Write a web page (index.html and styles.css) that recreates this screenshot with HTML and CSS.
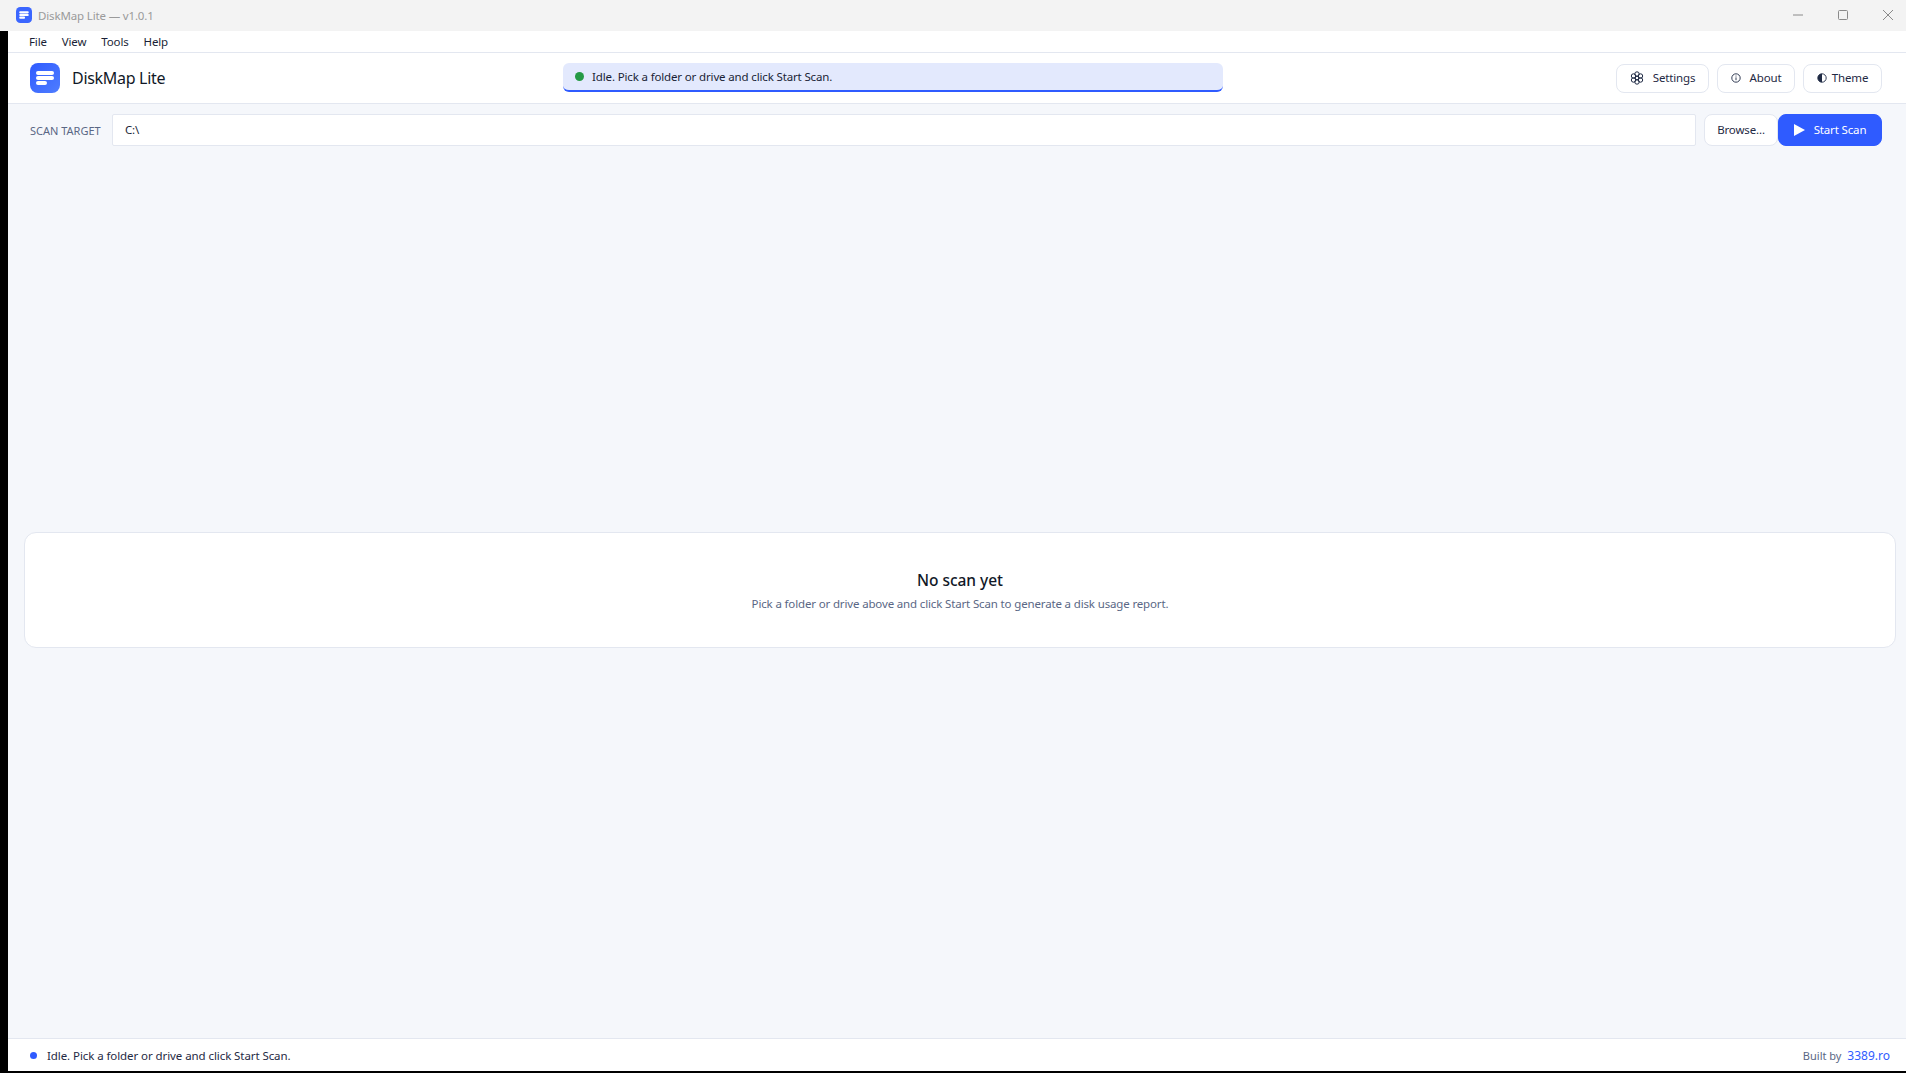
FILE: index.html
```html
<!DOCTYPE html>
<html lang="en">
<head>
    <meta charset="UTF-8">
    <title>DiskMap Lite — v1.0.1</title>
    <link rel="stylesheet" href="styles.css">
</head>
<body>
    <div class="titlebar">
        <div class="titlebar-left">
            <svg class="title-icon" viewBox="0 0 30 30">
                <rect width="30" height="30" rx="8" fill="#3b66ff"/>
                <rect x="6" y="8" width="18" height="4" rx="2" fill="#fff"/>
                <rect x="6" y="13" width="18" height="4" rx="2" fill="#fff"/>
                <rect x="6" y="18" width="11" height="4" rx="2" fill="#fff"/>
            </svg>
            <span>DiskMap Lite — v1.0.1</span>
        </div>
        <div class="window-controls">
            <svg class="win-btn" viewBox="0 0 12 12"><path d="M1 6h10" stroke="#8a8a8a" fill="none"/></svg>
            <svg class="win-btn" viewBox="0 0 12 12"><rect x="1.5" y="1.5" width="9" height="9" rx="1" stroke="#8a8a8a" fill="none"/></svg>
            <svg class="win-btn" viewBox="0 0 12 12"><path d="M1 1l10 10M11 1L1 11" stroke="#8a8a8a" fill="none"/></svg>
        </div>
    </div>

    <div class="window-body">
        <div class="edge"></div>
        <div class="app">
            <div class="menubar">
                <span>File</span>
                <span>View</span>
                <span>Tools</span>
                <span>Help</span>
            </div>

            <div class="header">
                <div class="brand">
                    <svg class="logo" viewBox="0 0 30 30">
                        <defs>
                            <linearGradient id="logo-fill" x1="0" y1="0" x2="1" y2="1">
                                <stop offset="0" stop-color="#2f5bff"/>
                                <stop offset="1" stop-color="#4f7dff"/>
                            </linearGradient>
                        </defs>
                        <rect width="30" height="30" rx="8" fill="url(#logo-fill)"/>
                        <rect x="6" y="8" width="18" height="4" rx="2" fill="#fff"/>
                        <rect x="6" y="13" width="18" height="4" rx="2" fill="#fff"/>
                        <rect x="6" y="18" width="11" height="4" rx="2" fill="#fff"/>
                    </svg>
                    <span class="brand-name">DiskMap Lite</span>
                </div>
                <div class="status-banner">
                    <span class="status-dot"></span>
                    <span>Idle. Pick a folder or drive and click Start Scan.</span>
                </div>
                <div class="actions">
                    <button class="btn btn-settings">
                        <svg class="btn-icon" viewBox="0 0 14 14" fill="none" stroke="#1f2a44" stroke-width="1">
                            <circle cx="7" cy="7" r="1.8"/>
                            <circle cx="7" cy="3" r="2.2"/>
                            <circle cx="10.5" cy="5" r="2.2"/>
                            <circle cx="10.5" cy="9" r="2.2"/>
                            <circle cx="7" cy="11" r="2.2"/>
                            <circle cx="3.5" cy="9" r="2.2"/>
                            <circle cx="3.5" cy="5" r="2.2"/>
                        </svg>
                        Settings
                    </button>
                    <button class="btn btn-about">
                        <svg class="btn-icon-small" viewBox="0 0 10 10" fill="none" stroke="#1f2a44" stroke-width="0.9">
                            <circle cx="5" cy="5" r="4.2"/>
                            <path d="M5 4.4v2.8M5 2.6v0.9"/>
                        </svg>
                        About
                    </button>
                    <button class="btn btn-theme">
                        <svg class="btn-icon-small" viewBox="0 0 10 10">
                            <circle cx="5" cy="5" r="4.2" fill="none" stroke="#1f2a44" stroke-width="0.9"/>
                            <path d="M5 .8a4.2 4.2 0 0 0 0 8.4z" fill="#1f2a44"/>
                        </svg>
                        Theme
                    </button>
                </div>
            </div>

            <div class="scan-row">
                <label class="scan-label">SCAN TARGET</label>
                <input class="scan-input" type="text" value="C:\">
                <button class="btn btn-browse">Browse...</button>
                <button class="btn btn-start">
                    <svg class="play-icon" viewBox="0 0 11 12"><path d="M0 0l11 6-11 6z" fill="#fff"/></svg>
                    Start Scan
                </button>
            </div>

            <div class="main">
                <div class="empty-card">
                    <div class="empty-title">No scan yet</div>
                    <div class="empty-text">Pick a folder or drive above and click Start Scan to generate a disk usage report.</div>
                </div>
            </div>

            <div class="footer">
                <div class="footer-status">
                    <span class="footer-dot"></span>
                    <span>Idle. Pick a folder or drive and click Start Scan.</span>
                </div>
                <div class="footer-credit">Built by <a class="credit-link">3389.ro</a></div>
            </div>
        </div>
    </div>
    <div class="bottom-edge"></div>
</body>
</html>
```

FILE: styles.css
```css
* {
    box-sizing: border-box;
}
html, body {
    height: 100%;
}
body {
    margin: 0;
    display: flex;
    flex-direction: column;
    overflow: hidden;
    font-family: "Noto Sans", "Open Sans", sans-serif;
    font-size: 11.5px;
    letter-spacing: -0.15px;
    color: #1f2a44;
    background-color: #000;
}
.titlebar {
    height: 31px;
    flex: none;
    display: flex;
    justify-content: space-between;
    align-items: center;
    padding: 0 0 1px 16px;
    background-color: #f3f3f3;
    color: #9a9a9a;
}
.titlebar-left {
    display: flex;
    align-items: center;
    gap: 6px;
}
.title-icon {
    width: 16px;
    height: 16px;
}
.window-controls {
    display: flex;
    gap: 33px;
    padding-right: 12px;
}
.win-btn {
    width: 12px;
    height: 12px;
}
.window-body {
    flex: 1;
    display: flex;
    min-height: 0;
}
.edge {
    width: 8px;
    flex: none;
    background-color: #000;
}
.bottom-edge {
    height: 2px;
    flex: none;
    background-color: #000;
}
.app {
    flex: 1;
    display: flex;
    flex-direction: column;
    min-width: 0;
    background-color: #f5f7fb;
}
.menubar {
    height: 22px;
    flex: none;
    display: flex;
    align-items: center;
    gap: 15px;
    padding-left: 21px;
    background-color: #fff;
    border-bottom: 1px solid #e3e7f0;
    color: #1a1f36;
}
.header {
    height: 51px;
    flex: none;
    display: flex;
    justify-content: space-between;
    align-items: center;
    padding: 0 24px 0 22px;
    background-color: #fff;
    border-bottom: 1px solid #e3e7f0;
}
.brand {
    display: flex;
    align-items: center;
    gap: 12px;
}
.logo {
    width: 30px;
    height: 30px;
}
.brand-name {
    font-size: 16px;
    font-weight: 400;
    letter-spacing: -0.3px;
    color: #111827;
}
.status-banner {
    width: 660px;
    height: 29px;
    margin: 0 0 1px 5px;
    display: flex;
    align-items: center;
    gap: 8px;
    padding: 0 12px;
    background-color: #e3e9fd;
    border-bottom: 2px solid #2f5bff;
    border-radius: 6px;
    color: #1a1f36;
}
.status-dot {
    width: 9px;
    height: 9px;
    border-radius: 50%;
    background-color: #259a45;
}
.actions {
    display: flex;
    gap: 8px;
}
.btn {
    height: 29px;
    display: flex;
    align-items: center;
    justify-content: center;
    padding: 0 0 1px;
    font-family: inherit;
    font-size: 11.5px;
    letter-spacing: inherit;
    color: #1f2a44;
    background-color: #fff;
    border: 1px solid #e3e7f0;
    border-radius: 8px;
}
.btn-settings {
    width: 93px;
    gap: 9px;
}
.btn-about {
    width: 78px;
    gap: 9px;
}
.btn-theme {
    width: 79px;
    gap: 5px;
}
.btn-icon {
    width: 14px;
    height: 14px;
}
.btn-icon-small {
    width: 10px;
    height: 10px;
}
.scan-row {
    height: 53px;
    flex: none;
    display: flex;
    align-items: flex-start;
    padding: 10px 24px 0 22px;
}
.scan-label {
    width: 82px;
    line-height: 33px;
    font-size: 11px;
    letter-spacing: 0;
    color: #5a6785;
}
.scan-input {
    flex: 1;
    height: 32px;
    padding: 0 12px 1px;
    margin-right: 8px;
    font-family: inherit;
    font-size: 11.5px;
    letter-spacing: inherit;
    color: #1a1f36;
    background-color: #fff;
    border: 1px solid #e3e7f0;
    border-radius: 2px;
    outline: none;
}
.btn-browse {
    width: 74px;
    height: 32px;
}
.btn-start {
    width: 104px;
    height: 32px;
    gap: 9px;
    color: #fff;
    background-color: #2f5bff;
    border-color: #2f5bff;
}
.play-icon {
    width: 11px;
    height: 12px;
}
.main {
    flex: 1;
    display: flex;
    flex-direction: column;
    justify-content: center;
    padding: 0 10px 16px 16px;
    min-height: 0;
}
.empty-card {
    height: 116px;
    display: flex;
    flex-direction: column;
    align-items: center;
    justify-content: center;
    gap: 5px;
    background-color: #fff;
    border: 1px solid #e3e7f0;
    border-radius: 12px;
}
.empty-title {
    font-size: 15.5px;
    font-weight: 500;
    letter-spacing: -0.05px;
    color: #111827;
}
.empty-text {
    color: #5a6785;
}
.footer {
    height: 33px;
    flex: none;
    display: flex;
    justify-content: space-between;
    align-items: center;
    padding: 0 16px 0 22px;
    background-color: #fff;
    border-top: 1px solid #e3e7f0;
}
.footer-status {
    display: flex;
    align-items: center;
    gap: 10px;
    letter-spacing: -0.08px;
}
.footer-dot {
    width: 7px;
    height: 7px;
    border-radius: 50%;
    background-color: #2f5bff;
}
.footer-credit {
    font-size: 11px;
    letter-spacing: 0;
    color: #5a6785;
}
.credit-link {
    margin-left: 3px;
    font-size: 12px;
    color: #2f5bff;
}
```
